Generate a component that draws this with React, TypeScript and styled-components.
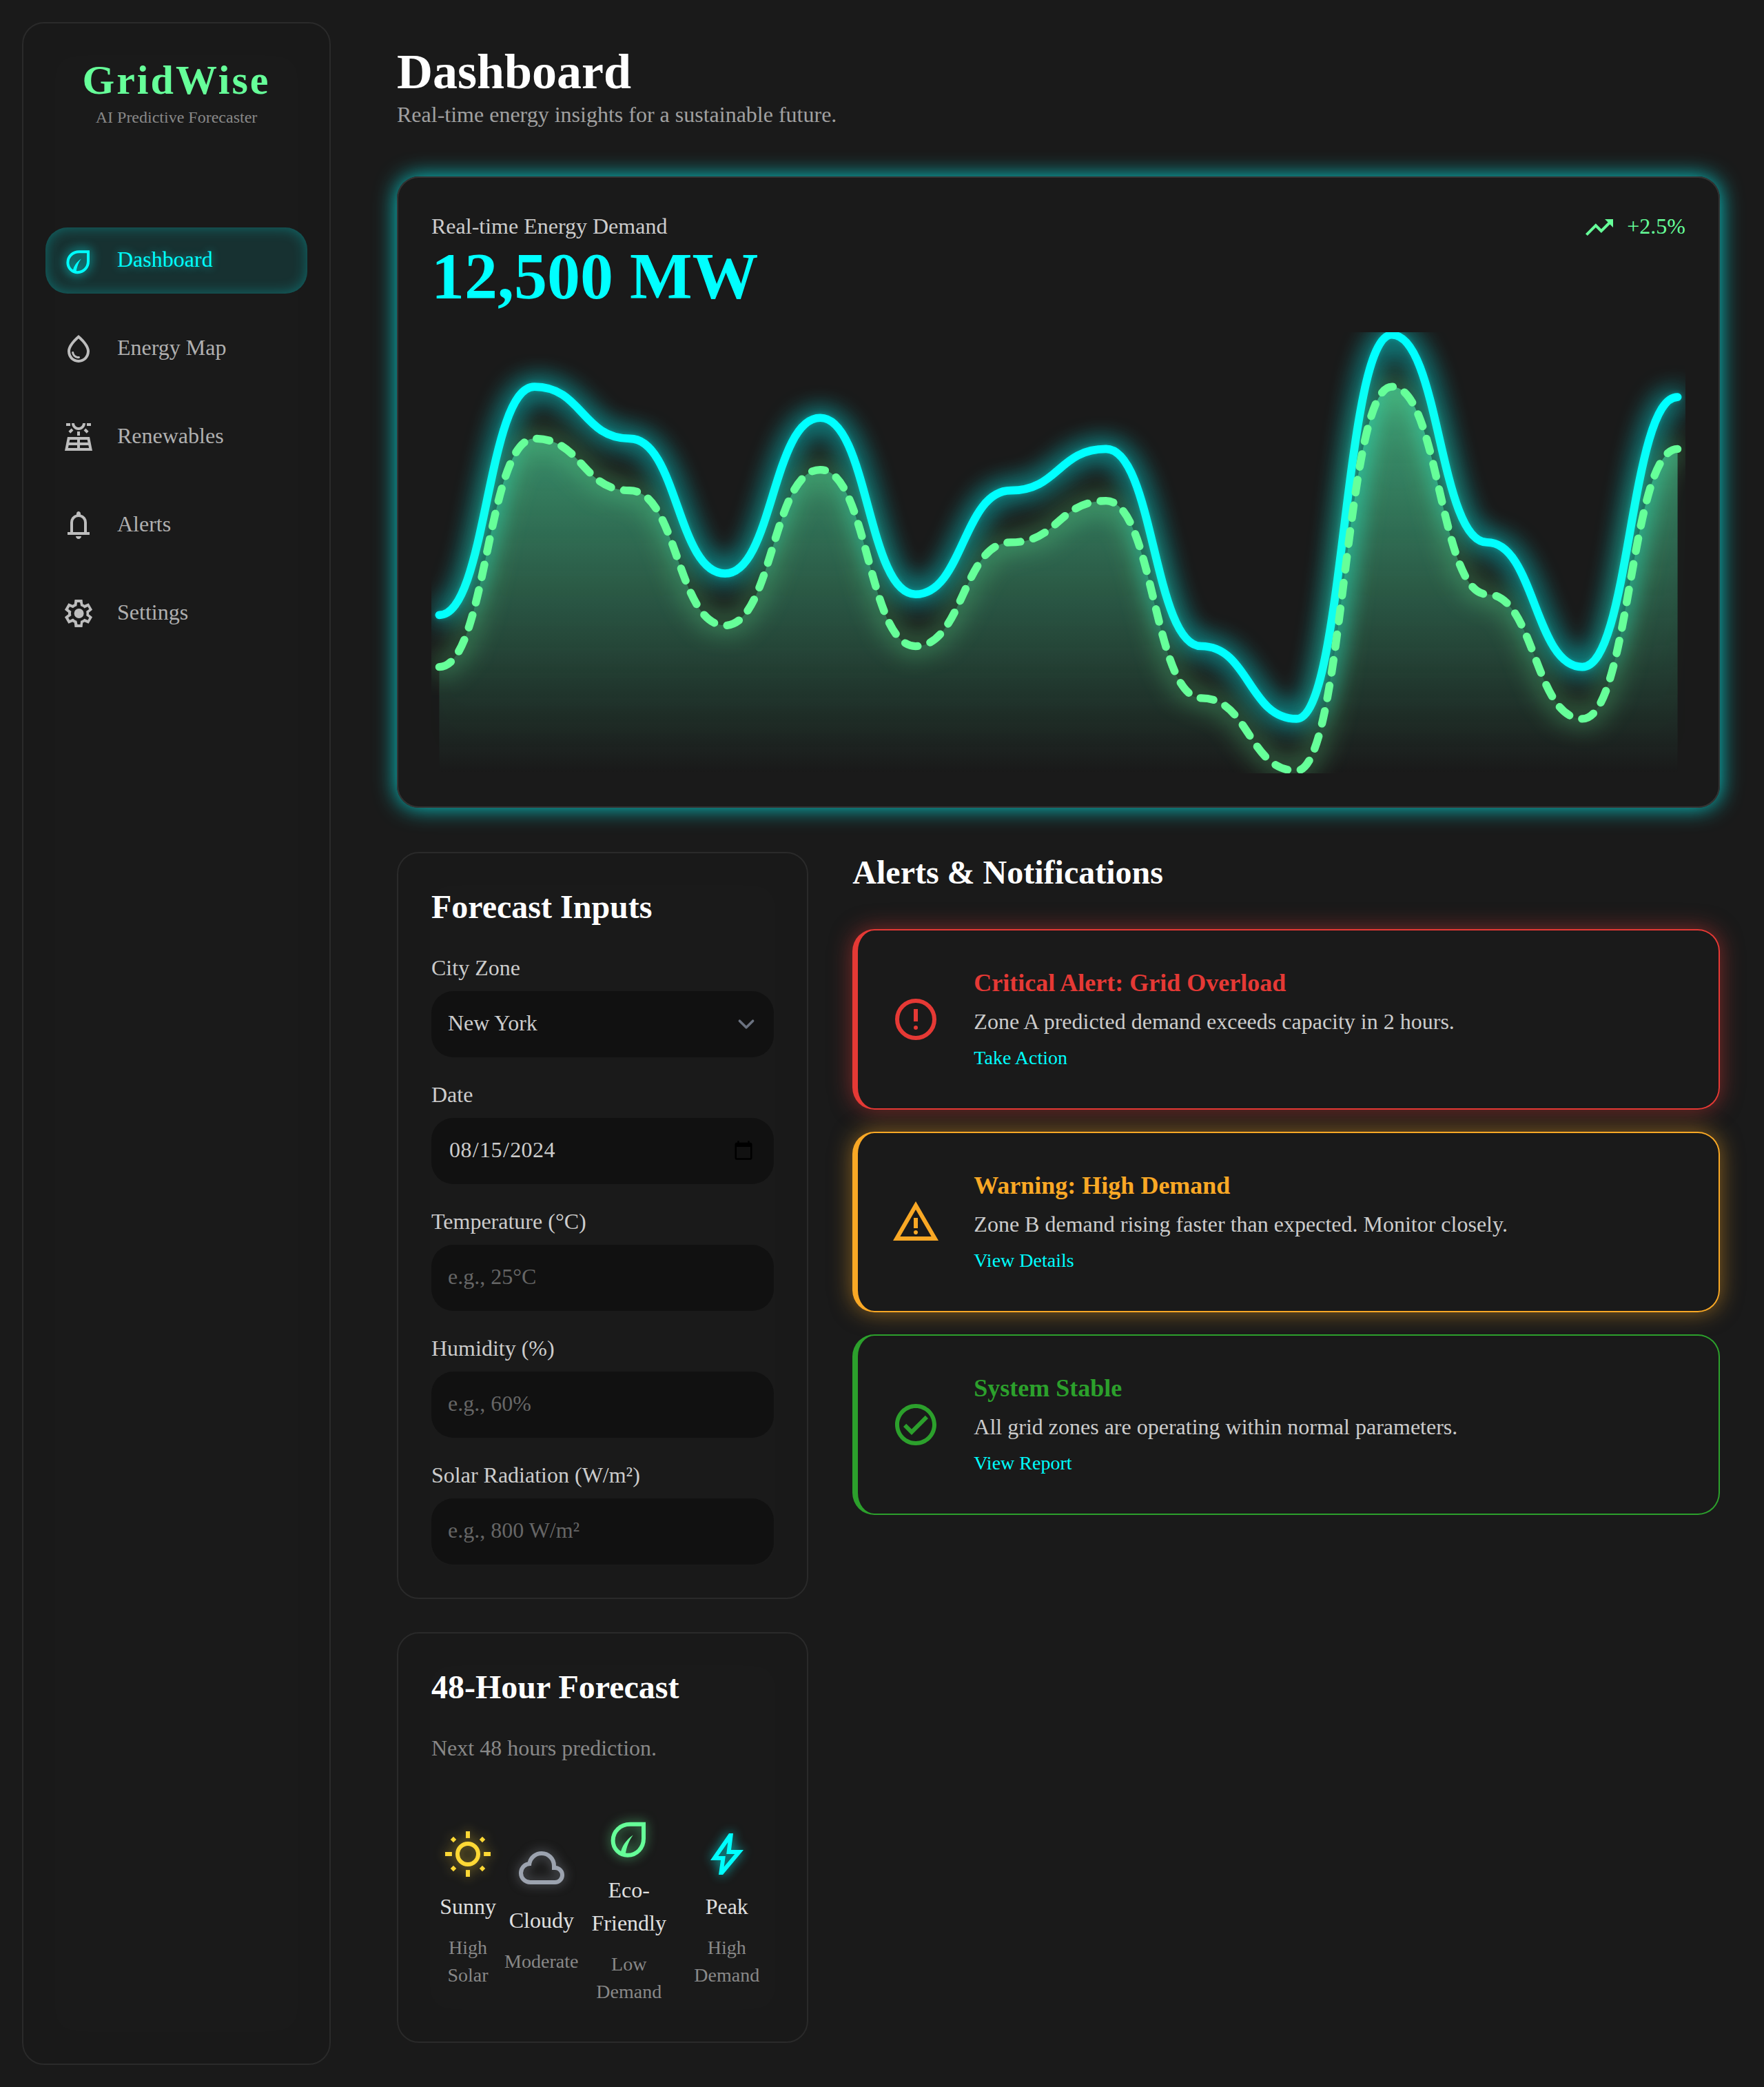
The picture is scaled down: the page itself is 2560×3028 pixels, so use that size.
import React from 'react';
import styled, { createGlobalStyle, css } from 'styled-components';
import {
  MdOutlineWaterDrop, MdOutlineSolarPower,
  MdTrendingUp, MdOutlineCheckCircle,
} from 'react-icons/md';

const CYAN = '#00ffff';
const GREEN = '#66ff99';

const Global = createGlobalStyle`
  * { box-sizing: border-box; }
  html, body { margin: 0; padding: 0; background: #1a1a1a; }
  body { font-family: "Liberation Serif", "Times New Roman", serif; font-size: 32px; line-height: 48px; color: #e0e0e0; }
  h1, h2, h3, p { margin: 0; }
`;

const Page = styled.div`
  display: flex;
  min-height: 100vh;
  background: #1a1a1a;
`;

const Sidebar = styled.aside`
  flex: 0 0 448px;
  margin: 32px 0 32px 32px;
  padding: 48px 32px;
  border: 2px solid #2a2a2a;
  border-radius: 32px;
  box-shadow: inset 0 0 64px rgba(0, 0, 0, 0.06);
`;

const Brand = styled.div`
  text-align: center;
  margin-bottom: 144px;
`;

const BrandName = styled.div`
  font-size: 60px;
  line-height: 68px;
  margin-bottom: 4px;
  font-weight: 700;
  letter-spacing: 3px;
  color: ${GREEN};
`;

const BrandTag = styled.div`
  font-size: 24px;
  line-height: 32px;
  color: #888888;
`;

const Nav = styled.nav`
  display: flex;
  flex-direction: column;
  gap: 32px;
`;

const NavItem = styled.a<{ $active?: boolean }>`
  display: flex;
  align-items: center;
  gap: 32px;
  height: 96px;
  padding: 0 24px;
  border-radius: 32px;
  color: #b0b0b0;
  svg { width: 48px; height: 48px; color: #bdbdbd; flex: none; }
  ${(p) => p.$active && css`
    color: ${CYAN};
    background: rgba(0, 255, 255, 0.1);
    box-shadow: inset 0 0 20px rgba(0, 255, 255, 0.3);
    text-shadow: 0 0 12px rgba(0, 255, 255, 0.5);
    svg { color: ${CYAN}; filter: drop-shadow(0 0 8px ${CYAN}); }
  `}
`;

const RaisedText = styled.span`
  margin-top: -4px;
`;

const Main = styled.main`
  flex: 1;
  min-width: 0;
  padding: 64px 64px 64px 96px;
`;

const Title = styled.h1`
  font-size: 72px;
  line-height: 80px;
  font-weight: 700;
  color: #ffffff;
`;

const Subtitle = styled.p`
  color: #a0a0a0;
  line-height: 44px;
  margin-bottom: 68px;
`;

const ChartCard = styled.section`
  padding: 48px;
  border: 2px solid #333333;
  border-radius: 32px;
  box-shadow: 0 0 32px rgba(0, 255, 255, 0.8);
  margin-bottom: 64px;
`;

const ChartHead = styled.div`
  display: flex;
  justify-content: space-between;
  align-items: flex-start;
  margin-bottom: 32px;
`;

const ChartLabel = styled.div`
  color: #cccccc;
  line-height: 44px;
  margin-bottom: 4px;
`;

const ChartValue = styled.div`
  font-size: 96px;
  line-height: 94px;
  margin-bottom: 2px;
  font-weight: 700;
  color: ${CYAN};
`;

const Trend = styled.div`
  display: flex;
  align-items: center;
  gap: 16px;
  height: 48px;
  color: ${GREEN};
  svg { width: 48px; height: 48px; }
`;

const ChartSvg = styled.svg`
  display: block;
  width: 100%;
  height: 640px;
`;

const Area = styled.path`
  filter: drop-shadow(0 0 5px rgba(102, 255, 153, 0.1));
`;

const MainLine = styled.path`
  fill: none;
  stroke: ${CYAN};
  stroke-width: 3.1;
  stroke-linecap: round;
  filter: drop-shadow(0 0 5px ${CYAN}) drop-shadow(0 0 1px rgba(0, 255, 255, 0.4));
`;

const DashLine = styled.path`
  fill: none;
  stroke: ${GREEN};
  stroke-width: 3;
  stroke-linecap: round;
  stroke-dasharray: 5 5;
  filter: drop-shadow(0 0 5px ${GREEN});
`;

const Lower = styled.div`
  display: grid;
  grid-template-columns: repeat(3, 1fr);
  gap: 64px;
  align-items: start;
`;

const LeftCol = styled.div`
  display: flex;
  flex-direction: column;
  gap: 48px;
  min-width: 0;
`;

const RightCol = styled.div`
  grid-column: span 2;
`;

const Panel = styled.section`
  padding: 48px;
  border: 2px solid #2a2a2a;
  border-radius: 32px;
  box-shadow: inset 0 0 64px rgba(0, 0, 0, 0.06);
`;

const SectionTitle = styled.h2`
  font-size: 48px;
  line-height: 60px;
  margin-bottom: 4px;
  font-weight: 700;
  color: #ffffff;
`;

const FormTitle = styled(SectionTitle)`
  margin-bottom: 36px;
`;

const AlertsTitle = styled(SectionTitle)`
  margin-bottom: 52px;
`;

const Form = styled.form`
  display: flex;
  flex-direction: column;
  gap: 32px;
`;

const Field = styled.label`
  display: block;
  position: relative;
  color: #cccccc;
`;

const FieldLabel = styled.span`
  display: block;
  line-height: 44px;
  margin-bottom: 12px;
`;

const controlCss = css`
  display: block;
  width: 100%;
  height: 96px;
  padding: 0 24px 4px;
  border: 0;
  outline: 0;
  border-radius: 32px;
  background: #111111;
  color: #cccccc;
  font: inherit;
  font-size: 32px;
  &::placeholder { color: #666666; opacity: 1; }
`;

const TextInput = styled.input`
  ${controlCss}
`;

const DateInput = styled.input`
  ${controlCss}
  padding-left: 25px;
  letter-spacing: 0.4px;
  &::-webkit-calendar-picker-indicator { width: 32px; height: 32px; padding: 0; margin: 4px 4px 0 0; }
`;

const Select = styled.select`
  ${controlCss}
  appearance: none;
`;

const Chevron = styled.svg`
  position: absolute;
  right: 16px;
  bottom: 24px;
  width: 48px;
  height: 48px;
  fill: none;
  stroke: #6b7280;
  stroke-width: 1.5;
  stroke-linecap: round;
  stroke-linejoin: round;
  pointer-events: none;
`;

const ForecastNote = styled.p`
  margin: 36px 0 72px;
  line-height: 44px;
  color: #888888;
`;

const ForecastRow = styled.div`
  display: flex;
  justify-content: space-between;
  align-items: center;
  margin-bottom: 4px;
`;

const ForecastItem = styled.div`
  display: flex;
  flex-direction: column;
  align-items: center;
  text-align: center;
`;

const ForecastIcon = styled.span<{ $color: string; $glow: string }>`
  display: block;
  height: 72px;
  margin-bottom: 16px;
  color: ${(p) => p.$color};
  svg { display: block; width: 72px; height: 72px; filter: drop-shadow(0 0 8px ${(p) => p.$glow}); }
`;

const ForecastName = styled.div`
  color: #e0e0e0;
`;

const ForecastSub = styled.div`
  margin-top: 16px;
  font-size: 28px;
  line-height: 40px;
  color: #888888;
`;

const AlertList = styled.div`
  display: flex;
  flex-direction: column;
  gap: 32px;
`;

const Alert = styled.article<{ $color: string; $glow: string }>`
  display: flex;
  align-items: center;
  gap: 48px;
  padding: 48px;
  border: 2px solid ${(p) => p.$color};
  border-left-width: 8px;
  border-radius: 32px;
  box-shadow: 0 0 32px ${(p) => p.$glow};
  > svg { width: 72px; height: 72px; flex: none; color: ${(p) => p.$color}; }
`;

const AlertBody = styled.div`
  min-width: 0;
  padding-bottom: 2px;
`;

const AlertTitle = styled.h3<{ $color: string }>`
  font-size: 36px;
  line-height: 56px;
  font-weight: 700;
  color: ${(p) => p.$color};
  margin-bottom: 4px;
`;

const AlertText = styled.p`
  color: #cccccc;
`;

const AlertLink = styled.a`
  display: block;
  margin-top: 9px;
  margin-bottom: 3px;
  font-size: 28px;
  line-height: 40px;
  color: ${CYAN};
`;

type IconProps = React.SVGProps<SVGSVGElement>;

const Glyph = ({ d, ...rest }: IconProps & { d: string }) => (
  <svg viewBox="0 0 24 24" fill="currentColor" {...rest}><path d={d} fillRule="evenodd" /></svg>
);

const LeafIcon = () => (
  <svg viewBox="0 0 24 24" fill="currentColor">
    <path d="M19 5.6V12.5C19 17 15.7 20.6 11.3 20.6C7.4 20.6 4.2 17.5 4.2 13.5C4.2 9 7.8 5.6 12.5 5.6Z" fill="none" stroke="currentColor" strokeWidth="2" />
    <path d="M7.8 19.8C8.4 16.3 10.6 13 13.9 10.8C12 13.4 10.8 16.4 10.2 20.2Z" />
  </svg>
);

const SettingsIcon = () => (
  <svg viewBox="0 0 24 24" fill="currentColor">
    <path d="m9.25 22-.4-3.2q-.325-.125-.612-.3-.288-.175-.563-.375L4.7 19.375l-2.75-4.75 2.575-1.95Q4.5 12.5 4.5 12.337v-.675q0-.162.025-.337L1.95 9.375l2.75-4.75 2.975 1.25q.275-.2.575-.375.3-.175.6-.3l.4-3.2h5.5l.4 3.2q.325.125.613.3.287.175.562.375l2.975-1.25 2.75 4.75-2.575 1.95q.025.175.025.337v.675q0 .163-.05.338l2.575 1.95-2.75 4.75-2.95-1.25q-.275.2-.575.375-.3.175-.6.3l-.4 3.2Zm2-2h1.975l.35-2.65q.775-.2 1.438-.588.662-.387 1.212-.937l2.475 1.025.975-1.7-2.15-1.625q.125-.35.175-.737.05-.388.05-.788t-.05-.788q-.05-.387-.175-.737l2.15-1.625-.975-1.7-2.475 1.05q-.55-.575-1.212-.963-.663-.387-1.438-.587L13 4h-1.975l-.35 2.65q-.775.2-1.437.587-.663.388-1.213.938L5.55 7.15l-.975 1.7 2.15 1.6q-.125.375-.175.75-.05.375-.05.8 0 .4.05.775t.175.75l-2.15 1.625.975 1.7 2.475-1.05q.55.575 1.213.962.662.388 1.437.588Zm1.05-4.5q1.45 0 2.475-1.025Q15.8 13.45 15.8 12q0-1.45-1.025-2.475Q13.75 8.5 12.3 8.5q-1.475 0-2.488 1.025Q8.8 10.55 8.8 12q0 1.45 1.012 2.475Q10.825 15.5 12.3 15.5Z" />
  </svg>
);

const BellIcon = () => (
  <svg viewBox="0 0 24 24" fill="currentColor">
    <path fillRule="evenodd" d="M4 19v-2h2v-7q0-2.075 1.25-3.688Q8.5 4.7 10.5 4.2v-.7q0-.625.438-1.062Q11.375 2 12 2t1.062.438q.438.437.438 1.062v.7q2 .5 3.25 2.112Q18 7.925 18 10v7h2v2ZM8 17h8v-7q0-1.65-1.175-2.825Q13.65 6 12 6q-1.65 0-2.825 1.175Q8 8.35 8 10Z" />
    <path d="M12 22q-.825 0-1.412-.587Q10 20.825 10 20h4q0 .825-.588 1.413Q12.825 22 12 22Z" />
  </svg>
);

const SunIcon = () => (
  <svg viewBox="0 0 24 24" fill="currentColor">
    <circle cx="12" cy="12" r="5" fill="none" stroke="currentColor" strokeWidth="2" />
    <rect x="11" y="1" width="2" height="3.3" />
    <rect x="11" y="19.7" width="2" height="3.3" />
    <rect x="1" y="11" width="3.3" height="2" />
    <rect x="19.7" y="11" width="3.3" height="2" />
    <rect x="4" y="4" width="2" height="2" transform="rotate(45 5 5)" />
    <rect x="18" y="4" width="2" height="2" transform="rotate(45 19 5)" />
    <rect x="4" y="18" width="2" height="2" transform="rotate(45 5 19)" />
    <rect x="18" y="18" width="2" height="2" transform="rotate(45 19 19)" />
  </svg>
);

const CloudIcon = () => (
  <Glyph d="M6.5 20q-2.275 0-3.887-1.575Q1 16.85 1 14.575q0-1.95 1.175-3.475Q3.35 9.575 5.25 9.15q.625-2.3 2.5-3.725Q9.625 4 12 4q2.925 0 4.962 2.038Q19 8.075 19 11q1.725.2 2.863 1.487Q23 13.775 23 15.5q0 1.875-1.312 3.188Q20.375 20 18.5 20Zm0-2h12q1.05 0 1.775-.725Q21 16.55 21 15.5q0-1.05-.725-1.775Q19.55 13 18.5 13H17v-2q0-2.075-1.462-3.538Q14.075 6 12 6 9.925 6 8.463 7.462 7 8.925 7 11h-.5q-1.45 0-2.475 1.025Q3 13.05 3 14.5q0 1.45 1.025 2.475Q5.05 18 6.5 18Z" />
);

const BoltIcon = () => (
  <Glyph d="M8 22l1-7H4L13 2h2l-1 8h6L10 22ZM7.8 13h3.49l-.74 5.2L15.73 12h-3.98l.7-5.65Z" />
);

const ErrorIcon = () => (
  <svg viewBox="0 0 24 24" fill="currentColor">
    <circle cx="12" cy="12" r="9" fill="none" stroke="currentColor" strokeWidth="2" />
    <rect x="11" y="7" width="2" height="6" />
    <circle cx="12" cy="16" r="1" />
  </svg>
);

const WarningIcon = () => (
  <Glyph d="M1 21 12 2l11 19Zm3.45-2h15.1L12 6ZM12 18q.425 0 .713-.288Q13 17.425 13 17t-.287-.712Q12.425 16 12 16t-.712.288Q11 16.575 11 17t.288.712Q11.575 18 12 18Zm-1-3h2v-5h-2Z" />
);

const knots = [109, 21, 41, 93, 33, 101, 61, 45, 121, 149, 1, 81, 129, 25];
const STEP = 472 / 13;
const curve = (offset: number) =>
  knots.reduce((d, y, i) => {
    const x = i * STEP;
    if (i === 0) return `M0 ${y + offset}`;
    const mid = x - STEP / 2;
    return `${d}C${mid} ${knots[i - 1] + offset} ${mid} ${y + offset} ${x} ${y + offset}`;
  }, '');

const nav = [
  { label: 'Dashboard', Icon: LeafIcon, active: true },
  { label: 'Energy Map', Icon: MdOutlineWaterDrop },
  { label: 'Renewables', Icon: MdOutlineSolarPower },
  { label: 'Alerts', Icon: BellIcon },
  { label: 'Settings', Icon: SettingsIcon },
];

const forecast = [
  { name: 'Sunny', sub: 'High Solar', Icon: SunIcon, color: '#fdd835', glow: 'rgba(253,216,53,.6)' },
  { name: 'Cloudy', sub: 'Moderate', Icon: CloudIcon, color: '#9ca3af', glow: 'rgba(156,163,175,.6)' },
  { name: 'Eco-Friendly', sub: 'Low Demand', Icon: LeafIcon, color: GREEN, glow: 'rgba(102,255,153,.6)' },
  { name: 'Peak', sub: 'High Demand', Icon: BoltIcon, color: CYAN, glow: 'rgba(0,255,255,.7)' },
];

const alerts = [
  { title: 'Critical Alert: Grid Overload', text: 'Zone A predicted demand exceeds capacity in 2 hours.', link: 'Take Action', Icon: ErrorIcon, color: '#e53935', glow: 'rgba(229,57,53,.5)' },
  { title: 'Warning: High Demand', text: 'Zone B demand rising faster than expected. Monitor closely.', link: 'View Details', Icon: WarningIcon, color: '#f9a825', glow: 'rgba(249,168,37,.5)' },
  { title: 'System Stable', text: 'All grid zones are operating within normal parameters.', link: 'View Report', Icon: MdOutlineCheckCircle, color: '#2ca02c', glow: 'transparent' },
];

const fields = [
  { label: 'Temperature (°C)', placeholder: 'e.g., 25°C' },
  { label: 'Humidity (%)', placeholder: 'e.g., 60%' },
  { label: 'Solar Radiation (W/m²)', placeholder: 'e.g., 800 W/m²' },
];

export default function App() {
  return (
    <Page>
      <Global />
      <Sidebar>
        <Brand>
          <BrandName>GridWise</BrandName>
          <BrandTag>AI Predictive Forecaster</BrandTag>
        </Brand>
        <Nav>
          {nav.map(({ label, Icon, active }) => (
            <NavItem key={label} $active={active}>
              <Icon />
              <RaisedText>{label}</RaisedText>
            </NavItem>
          ))}
        </Nav>
      </Sidebar>
      <Main>
        <Title>Dashboard</Title>
        <Subtitle>Real-time energy insights for a sustainable future.</Subtitle>
        <ChartCard>
          <ChartHead>
            <div>
              <ChartLabel>Real-time Energy Demand</ChartLabel>
              <ChartValue>12,500 MW</ChartValue>
            </div>
            <Trend>
              <MdTrendingUp />
              <RaisedText>+2.5%</RaisedText>
            </Trend>
          </ChartHead>
          <ChartSvg viewBox="-3 0 478 170" preserveAspectRatio="none">
            <defs>
              <linearGradient id="area" x1="0" x2="0" y1="0" y2="1">
                <stop offset="0%" stopColor="#56ffba" stopOpacity="0.55" />
                <stop offset="100%" stopColor="#56ffba" stopOpacity="0" />
              </linearGradient>
            </defs>
            <Area d={`${curve(20)}V170H0Z`} fill="url(#area)" />
            <MainLine d={curve(0)} />
            <DashLine d={curve(20)} />
          </ChartSvg>
        </ChartCard>
        <Lower>
          <LeftCol>
            <Panel>
              <FormTitle>Forecast Inputs</FormTitle>
              <Form>
                <Field>
                  <FieldLabel>City Zone</FieldLabel>
                  <Select defaultValue="New York">
                    <option>New York</option>
                    <option>London</option>
                    <option>Tokyo</option>
                  </Select>
                  <Chevron viewBox="0 0 20 20"><path d="M6 8l4 4 4-4" /></Chevron>
                </Field>
                <Field>
                  <FieldLabel>Date</FieldLabel>
                  <DateInput type="date" defaultValue="2024-08-15" />
                </Field>
                {fields.map((f) => (
                  <Field key={f.label}>
                    <FieldLabel>{f.label}</FieldLabel>
                    <TextInput type="text" placeholder={f.placeholder} />
                  </Field>
                ))}
              </Form>
            </Panel>
            <Panel>
              <SectionTitle>48-Hour Forecast</SectionTitle>
              <ForecastNote>Next 48 hours prediction.</ForecastNote>
              <ForecastRow>
                {forecast.map(({ name, sub, Icon, color, glow }) => (
                  <ForecastItem key={name}>
                    <ForecastIcon $color={color} $glow={glow}><Icon /></ForecastIcon>
                    <ForecastName>{name}</ForecastName>
                    <ForecastSub>{sub}</ForecastSub>
                  </ForecastItem>
                ))}
              </ForecastRow>
            </Panel>
          </LeftCol>
          <RightCol>
            <AlertsTitle>Alerts &amp; Notifications</AlertsTitle>
            <AlertList>
              {alerts.map(({ title, text, link, Icon, color, glow }) => (
                <Alert key={title} $color={color} $glow={glow}>
                  <Icon />
                  <AlertBody>
                    <AlertTitle $color={color}>{title}</AlertTitle>
                    <AlertText>{text}</AlertText>
                    <AlertLink>{link}</AlertLink>
                  </AlertBody>
                </Alert>
              ))}
            </AlertList>
          </RightCol>
        </Lower>
      </Main>
    </Page>
  );
}
